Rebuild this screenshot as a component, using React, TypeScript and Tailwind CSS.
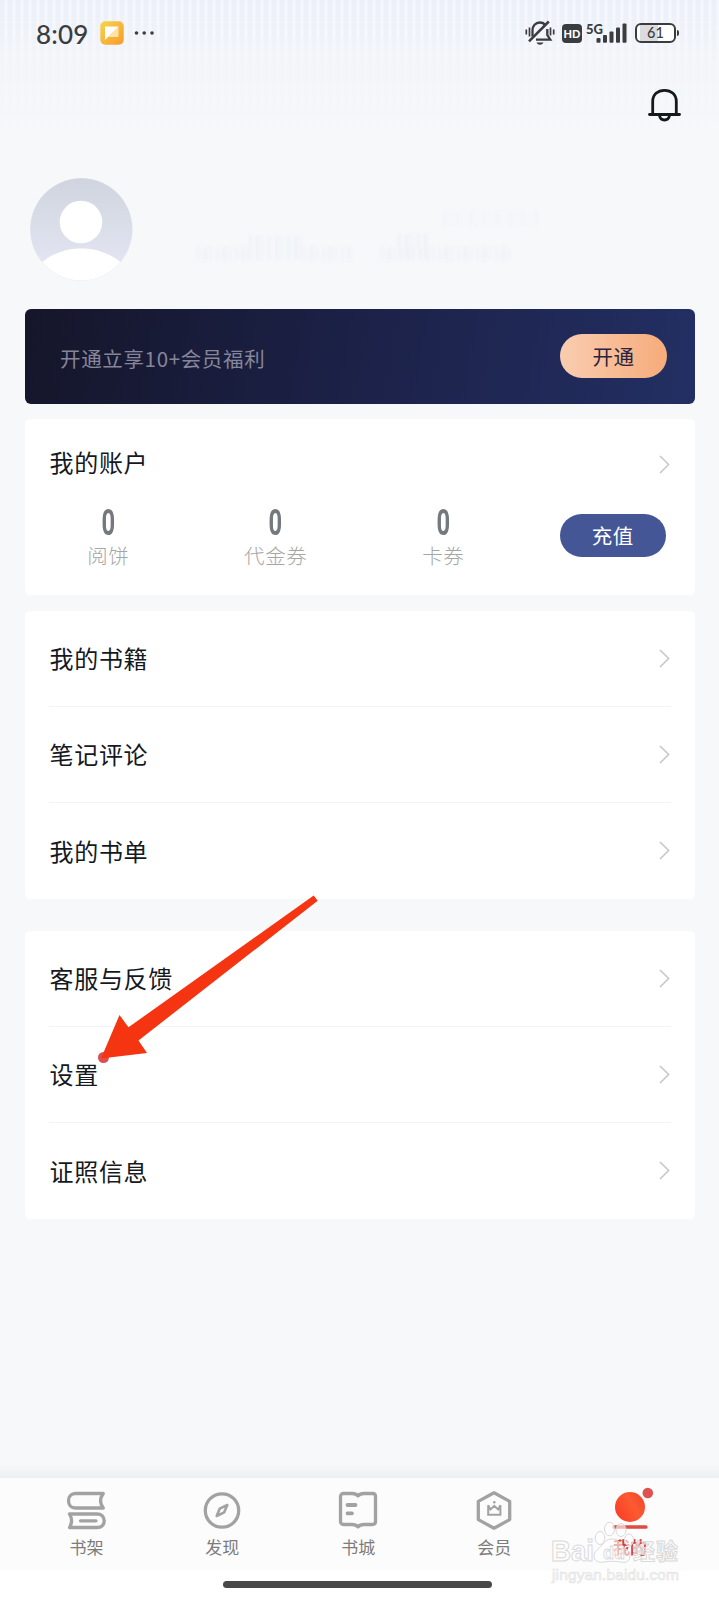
import type { ReactNode } from "react";

interface MenuItem {
  label: string;
  dot?: boolean;
}

const libraryMenu: MenuItem[] = [{ label: "我的书籍" }, { label: "笔记评论" }, { label: "我的书单" }];

const serviceMenu: MenuItem[] = [{ label: "客服与反馈" }, { label: "设置", dot: true }, { label: "证照信息" }];

const balances = ["阅饼", "代金券", "卡券"];

function Chevron() {
  return (
    <svg width="11" height="19" viewBox="0 0 11 19" fill="none" stroke="#c6c6c8" strokeWidth="1.5">
      <path d="M1 1l8.6 8.5L1 18" />
    </svg>
  );
}

function StatusBar() {
  return (
    <div className="flex h-[66px] items-center pl-[36px] pr-[40px] text-[#3b3c3f]">
      <span className="pt-px font-[Lato] text-[26px] font-medium leading-none tracking-[0.2px]">8:09</span>
      <svg className="ml-[11px]" width="24" height="24" viewBox="0 0 24 24">
        <defs>
          <linearGradient id="note" x1="0" y1="0" x2="1" y2="1">
            <stop offset="0" stopColor="#f5d64b" />
            <stop offset="1" stopColor="#f99a2c" />
          </linearGradient>
        </defs>
        <rect x="0.3" y="0.3" width="23.4" height="23.4" rx="5" fill="url(#note)" />
        <path d="M18.5 5.5V15q0 1-1 1H8z" fill="#ffe3a6" />
        <path d="M5 5.5h13.5L5 19z" fill="#fff" />
      </svg>
      <svg className="ml-[10px]" width="21" height="6" viewBox="0 0 21 6" fill="#3b3c3f">
        <circle cx="2.5" cy="3" r="1.8" />
        <circle cx="10.2" cy="3" r="1.8" />
        <circle cx="18" cy="3" r="1.8" />
      </svg>

      <div className="ml-auto flex items-center">
        <svg width="30" height="26" viewBox="0 0 30 26" fill="none" stroke="#3b3c3f" strokeWidth="2.3">
          <path d="M7.5 16.5V10.500c0-4.600 3-8 7.300-8 2.200 0 4 .8 5.200 2.100M22.300 9v6l3 4.700H11" />
          <path d="M4 21.300L23.800 1.500" strokeWidth="2.500" />
          <path d="M11.500 22.500h7c-.8 1.600-2 2.200-3.500 2.200s-2.700-.6-3.500-2.200z" fill="#3b3c3f" stroke="none" />
          <path d="M1.300 9.500v5M4.500 7.500v9M25.500 7.500v8M28.700 9.500v5" strokeWidth="1.700" />
        </svg>
        <span className="ml-[7px] flex h-[19px] w-[20px] items-center justify-center rounded-[4px] bg-[#3b3c3f] font-[Lato] text-[11px] font-black leading-none text-white">
          HD
        </span>
        <div className="ml-[4px] flex w-[41px] items-end">
          <span className="mb-[8px] font-[Lato] text-[13px] font-black leading-none">5G</span>
          <svg className="-ml-[7px] mb-px shrink-0" width="31" height="20" viewBox="0 0 31 20" fill="#3b3c3f">
            <rect x="0.500" y="15" width="4" height="4.800" rx="1" />
            <rect x="7" y="12" width="4" height="7.800" rx="1" />
            <rect x="13.500" y="8.500" width="4" height="11.300" rx="1" />
            <rect x="20" y="4.500" width="4" height="15.300" rx="1" />
            <rect x="26.500" y="0.500" width="4" height="19.300" rx="1" />
          </svg>
        </div>
        <div className="ml-[8px] flex items-center">
          <span className="flex h-[20px] w-[41px] items-center justify-center rounded-[6px] border-2 border-[#3b3c3f] bg-[linear-gradient(90deg,#fff_8%,#dcdcde_8%,#dcdcde_56%,#fff_56%)] font-[Lato] text-[14.500px] leading-none font-medium">
            61
          </span>
          <i className="ml-px h-[6px] w-[2px] rounded-r bg-[#3b3c3f]" />
        </div>
      </div>
    </div>
  );
}

function Profile() {
  return (
    <div className="flex h-[165px] items-start pl-[29.500px] pt-[34px]">
      <svg width="103" height="103" viewBox="0 0 103 103">
        <defs>
          <linearGradient id="avatar" x1="0" y1="0" x2="0" y2="1">
            <stop offset="0" stopColor="#cfd4de" />
            <stop offset="0.800" stopColor="#e2e5f1" />
          </linearGradient>
          <clipPath id="avatarClip">
            <circle cx="51.300" cy="51.300" r="51" />
          </clipPath>
        </defs>
        <circle cx="51.300" cy="51.300" r="51.300" fill="#eceef2" />
        <g clipPath="url(#avatarClip)">
          <rect width="103" height="103" fill="url(#avatar)" />
          <circle cx="51" cy="44" r="21.300" fill="#fff" />
          <path d="M8 88C20 76 35 70.500 51.300 70.500S82 76 95 88v15H8z" fill="#fff" />
        </g>
      </svg>
      {/* faint remains of the hidden nickname */}
      <svg className="ml-[60px] mt-[20px] blur-[1.500px]" width="360" height="75" viewBox="0 0 360 75" fill="none" stroke="#eff1f7">
        <path d="M4 56H60M110 56H158M188 56H319" strokeWidth="14" strokeDasharray="3 3 5 2 2 4" opacity="0.700" />
        <path d="M56 50H112M205 48H235" strokeWidth="24" strokeDasharray="3 3 5 2 2 4" opacity="0.800" />
        <path d="M250 20H345" strokeWidth="16" strokeDasharray="4 3 2 4" opacity="0.450" />
      </svg>
    </div>
  );
}

function MenuCard({ items }: { items: MenuItem[] }) {
  return (
    <div className="rounded-[5px] bg-white px-[24px]">
      {items.map((item) => (
        <div
          key={item.label}
          className="flex h-[96px] items-center justify-between border-b border-[#f4f4f5] pl-px pr-px last:border-b-0"
        >
          <span className="relative text-[24px] leading-none tracking-[0.700px] text-[#14191f]">
            {item.label}
            {item.dot && <i className="absolute -top-[10px] left-[48.500px] h-[11px] w-[11px] rounded-full bg-[#dc4f50]" />}
          </span>
          <Chevron />
        </div>
      ))}
    </div>
  );
}

function Tab({ label, active, children }: { label: string; active?: boolean; children: ReactNode }) {
  return (
    <div className="flex flex-1 flex-col items-center pt-[12px]">
      <svg width="40" height="40" viewBox="0 0 40 40" fill="none" stroke="#a2a2a2" strokeWidth="3.300" strokeLinejoin="round" className="overflow-visible">
        {children}
      </svg>
      <span className={active ? "mt-[7px] text-[17px] leading-[20px] font-bold text-[#d3423b]" : "mt-[7px] text-[17px] leading-[20px] text-[#7c7c7c]"}>
        {label}
      </span>
    </div>
  );
}

function TabBar() {
  return (
    <div className="relative h-[122px] bg-white">
      <div className="absolute -top-[14px] h-[14px] w-full bg-gradient-to-b from-transparent to-[#eeeff1]" />
      <div className="flex h-[93px] bg-[#fcfcfc] pl-[18.500px] pr-[21px]">
        <Tab label="书架">
          <path d="M37.300 3.500H9.500C5 3.500 2.500 6.500 2.500 10.700s2.500 7.300 7 7.300h27.800c-3.400-4.500-3.400-10 0-14.500z" />
          <path d="M3.500 24H31c4.500 0 7.200 2.700 7.200 6.800S35.500 37.500 31 37.500H3.500c2.600-4.200 2.600-9.300 0-13.500z" />
          <path d="M14.500 30.800h15.500" strokeLinecap="round" />
        </Tab>
        <Tab label="发现">
          <circle cx="20" cy="20.500" r="16.700" />
          <path d="M25.300 15l-3.100 7.300-7.500 3.700 3-7.300z" strokeWidth="2.600" />
        </Tab>
        <Tab label="书城">
          <path d="M5.500 3.500H14c3 0 4.700.8 6 2.300 1.300-1.500 3-2.300 6-2.300h8.500c1.800 0 3 1.200 3 3v25c0 1.800-1.200 3-3 3H26c-3 0-4.700.8-6 2.300-1.300-1.500-3-2.300-6-2.300H5.500c-1.800 0-3-1.200-3-3v-25c0-1.800 1.200-3 3-3z" />
          <path d="M9.500 15h8M9.500 23.300h4.500" strokeWidth="3.800" strokeLinecap="round" />
        </Tab>
        <Tab label="会员">
          <path d="M20 2.800l15.700 8.600v18.200L20 38.200 4.300 29.600V11.400z" />
          <path d="M14.200 15.300v9.500h12.200v-9.500l-2.200 4.200-3.900-3.600-3.900 3.600z" strokeWidth="2" strokeLinejoin="miter" strokeMiterlimit="2" />
          <circle cx="20.300" cy="12.300" r="1.300" fill="#a2a2a2" stroke="none" />
        </Tab>
        <Tab label="我的" active>
          <defs>
            <linearGradient id="me" x1="0" y1="0.800" x2="1" y2="0.200">
              <stop offset="0" stopColor="#fa3c26" />
              <stop offset="0.600" stopColor="#fb5b30" />
              <stop offset="1" stopColor="#f4452f" />
            </linearGradient>
          </defs>
          <circle cx="20" cy="17" r="15" fill="url(#me)" stroke="none" />
          <path d="M4.300 37h31.500" stroke="#e04a41" strokeWidth="3.700" strokeLinecap="round" />
          <circle cx="37.800" cy="3" r="5.300" fill="#df5050" stroke="none" />
        </Tab>
      </div>
      <div className="mx-auto mt-[10px] h-[7px] w-[269px] -translate-x-[2px] rounded-full bg-[#484848]" />
    </div>
  );
}

function Watermark() {
  return (
    <svg
      className="absolute left-[545px] top-[1515px]"
      width="150"
      height="75"
      viewBox="0 0 150 75"
      fill="#fff"
      fillOpacity="0.600"
      stroke="#d9d9d9"
      strokeWidth="1"
    >
      <ellipse cx="55" cy="23" rx="4.800" ry="6.500" />
      <ellipse cx="64.500" cy="14" rx="5" ry="6.700" />
      <ellipse cx="76" cy="15" rx="5" ry="6.500" />
      <ellipse cx="84" cy="25" rx="4.500" ry="6" />
      <path d="M68 24c5 0 7 4 10 7s8 6 7 11-5 6-9 5-12-1-17 0-10-1-10-6 5-7 8-11 6-6 11-6z" />
      <text x="6" y="46" className="font-[Liberation_Sans] text-[29px] font-bold" textLength="43" lengthAdjust="spacingAndGlyphs">
        Bai
      </text>
      <text x="58" y="44" className="font-[Liberation_Sans] text-[18px] font-bold" strokeWidth="0.800">
        du
      </text>
      <text x="88" y="44" className="text-[22px] font-bold" textLength="45">
        经验
      </text>
      <text x="7" y="64.500" className="font-[Liberation_Sans] text-[15.500px]" strokeWidth="0.700" stroke="#e2e2e2" textLength="127">
        jingyan.baidu.com
      </text>
    </svg>
  );
}

export default function App() {
  return (
    <div className="relative flex h-[1600px] w-[719px] flex-col overflow-hidden bg-[#f6f8fa] font-['Noto_Sans_CJK_SC',sans-serif]">
      <div className="absolute inset-x-0 top-0 h-[130px] bg-[repeating-linear-gradient(90deg,#ebeff9_0px,#ebeff9_4px,#f5f7fb_5px,#f5f7fb_7px,#ebeff9_8px)] [mask-image:linear-gradient(#000,rgba(0,0,0,0.300)_50%,transparent)]" />

      <div className="relative">
        <StatusBar />
        <div className="flex h-[78px] items-center justify-end pr-[38px]">
          <svg width="33" height="34" viewBox="0 0 33 34" fill="none" stroke="#15191c" strokeWidth="2.800">
            <path d="M4.700 26V13.500C4.700 6.700 9.600 2.300 16.500 2.300S28.300 6.700 28.300 13.500V26" />
            <path d="M1.500 26.500h30" strokeLinecap="round" />
            <path d="M11.500 27.500c.5 3 2.300 4.500 5 4.500s4.500-1.500 5-4.500" />
          </svg>
        </div>
      </div>

      <Profile />

      <div className="flex flex-col px-[24.500px]">
        <div className="flex h-[94.500px] items-center justify-between rounded-[6px] bg-[linear-gradient(100deg,#15162a,#1b2045_45%,#232f63)] pl-[35.500px] pr-[27.500px]">
          <span className="pt-[4px] text-[20.500px] leading-none tracking-[0.650px] text-[#85869a]">开通立享10+会员福利</span>
          <button className="flex h-[44px] w-[107px] items-center justify-center rounded-full bg-gradient-to-r from-[#f9cdb0] to-[#f6ab7a] text-[20.500px] tracking-[0.500px] text-[#2a2442]">
            开通
          </button>
        </div>

        <div className="mt-[15.500px] h-[176px] rounded-[5px] bg-white">
          <div className="flex items-center justify-between px-[24px] pt-[31px]">
            <span className="pl-px text-[24px] leading-[24px] tracking-[0.700px] text-[#14191f]">我的账户</span>
            <span className="pt-[5px] pr-px">
              <Chevron />
            </span>
          </div>
          <div className="mt-[29px] grid grid-cols-4">
            {balances.map((label) => (
              <div key={label} className="flex flex-col items-center pt-[2px]">
                <span className="scale-x-[0.660] font-[Roboto] text-[36px] font-bold leading-[36px] text-[#74797e]">0</span>
                <span className="mt-[2px] text-[20.500px] font-light leading-[24px] tracking-[0.600px] text-[#a6a6a6]">{label}</span>
              </div>
            ))}
            <div className="flex items-start justify-center pl-[4px] pt-[11px]">
              <button className="flex h-[43px] w-[106px] items-center justify-center rounded-full bg-[#445696] text-[20.500px] tracking-[0.500px] text-white">
                充值
              </button>
            </div>
          </div>
        </div>

        <div className="mt-[15.500px]">
          <MenuCard items={libraryMenu} />
        </div>
        <div className="mt-[32px]">
          <MenuCard items={serviceMenu} />
        </div>
      </div>

      <div className="mt-auto">
        <TabBar />
      </div>

      <svg className="absolute left-[95px] top-[890px]" width="230" height="175" viewBox="0 0 230 175" fill="#f53511">
        <path d="M218.700 5.500l4 5.200L43.500 150.500l8.500 12.500-46 5.500L24.500 125l9 12.300z" />
      </svg>
      <Watermark />
    </div>
  );
}
